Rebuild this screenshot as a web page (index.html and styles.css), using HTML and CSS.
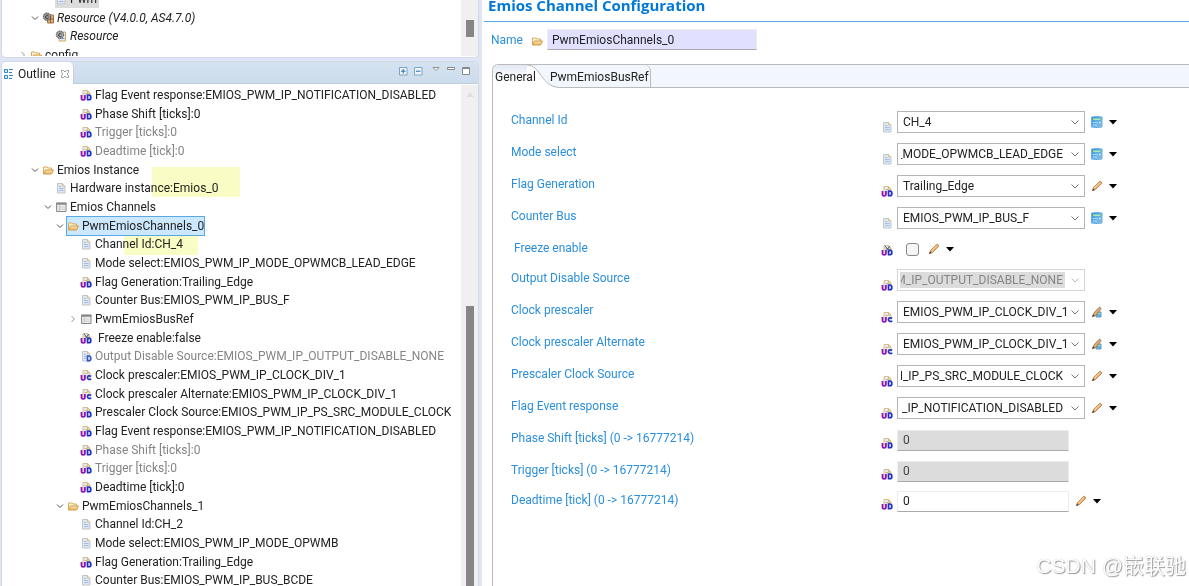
FILE: index.html
```html
<!DOCTYPE html>
<html lang="en">
<head>
<meta charset="utf-8">
<title>Emios Channel Configuration</title>
<link rel="stylesheet" href="styles.css">
</head>
<body>
<svg class="sprite" aria-hidden="true">
  <defs>
    <linearGradient id="fold" x1="0" y1="0" x2="0" y2="1"><stop offset="0" stop-color="#fdebb8"/><stop offset="1" stop-color="#e9b45c"/></linearGradient>
    <linearGradient id="calcfill" x1="0" y1="0" x2="1" y2="1"><stop offset="0" stop-color="#2f8fe0"/><stop offset="1" stop-color="#8fd0f4"/></linearGradient>
  </defs>
  <symbol id="folder" viewBox="0 0 12 12"><path d="M1.500 9.500v-6.500h3.500l1 1h3.500v2" fill="#fdf3d3" stroke="#dba95c"/><path d="M1.500 10l2-4h8l-2 4z" fill="url(#fold)" stroke="#cf9a4b"/></symbol>
  <symbol id="doc" viewBox="0 0 12 12"><path d="M2.500 1.500h5l2.500 2.500v7h-7.500z" fill="#dce8f7" stroke="#c3c6c8"/><path d="M7.500 1.500v2.500h2.500" fill="#f6e3b0" stroke="#d6c08f"/><path d="M4 4.500h2M4 6.500h4.500M4 8.500h4.500" stroke="#a3bcdf"/></symbol>
  <symbol id="page" viewBox="0 0 12 12"><path d="M3 9v-7.500h4.500l2.500 2.500v5" fill="#e3ebf6" stroke="#d3bf8c"/><path d="M7.500 1.500v2.500h2.500M4.500 4.500h3" fill="none" stroke="#d8b56a"/></symbol>
  <symbol id="ud" viewBox="0 0 12 12"><use href="#page"/><path d="M1.500 6v3.200q0 1.600 1.700 1.600t1.700-1.600v-3.200" fill="none" stroke="#9213b5" stroke-width="1.800"/><path d="M7.500 6v4.800h1.200q2.200 0 2.200-2.400t-2.200-2.400z" fill="#d9dcff" stroke="#1f2fc4" stroke-width="1.600"/></symbol>
  <symbol id="xud" viewBox="0 0 12 12"><use href="#ud"/><path d="M4 2l5 6M9 2l-5 6" stroke="#425b8e"/></symbol>
  <symbol id="uc" viewBox="0 0 12 12"><use href="#page"/><path d="M1.500 6v3.200q0 1.600 1.700 1.600t1.700-1.600v-3.200" fill="none" stroke="#9213b5" stroke-width="1.800"/><path d="M11.300 7.300q-3.600-1.400-3.800 1.200t3.800 1.600" fill="none" stroke="#2438b8" stroke-width="1.700"/></symbol>
  <symbol id="dd" viewBox="0 0 12 12"><use href="#doc"/><path d="M7.500 6v4.800h1.200q2.200 0 2.200-2.400t-2.200-2.400z" fill="#d9dcff" stroke="#2f55bb" stroke-width="1.500"/></symbol>
  <symbol id="table" viewBox="0 0 12 12"><path d="M1.500 2h9.500v8.500h-9.500z" fill="#f1f1f1" stroke="#888"/><path d="M1 2.800h10.500" stroke="#888" stroke-width="2"/><path d="M4.500 4v6M1.500 6h9.500M1.500 8.200h9.500" stroke="#bbb" stroke-width=".7"/></symbol>
  <symbol id="gear" viewBox="0 0 12 12"><path d="M6 3h5.500v8h-6z" fill="#e2b47b" stroke="#a5713e"/><path d="M5.500 7h6M8.500 4v7" stroke="#8b5d35"/><circle cx="5" cy="4.700" r="3.700" fill="#999" stroke="#444" stroke-dasharray="1.500 .7"/><path d="M6.500 4a1.600 1.600 0 1 0 0 2" fill="none" stroke="#333"/></symbol>
  <symbol id="geardoc" viewBox="0 0 12 12"><path d="M4 2h6.500v9h-6.500z" fill="#e6eefb" stroke="#d0aa62"/><path d="M5.500 8.500h4" stroke="#6f93c8"/><circle cx="5" cy="4.700" r="3.700" fill="#aaa" stroke="#444" stroke-dasharray="1.500 .7"/><path d="M6.500 4a1.600 1.600 0 1 0 0 2" fill="none" stroke="#333"/></symbol>
  <symbol id="calc" viewBox="0 0 12 12"><path d="M.5 1q5-1 10.500 0v10q-5 1-10.500 0z" fill="url(#calcfill)" stroke="#6aace0"/><path d="M2 2.500h7.500v1.500h-7.500z" fill="#dbf6c5" stroke="#5fc8a0" stroke-width=".6"/><path d="M2 6.500h5M2 9h4" stroke="#c4e6fb" stroke-dasharray="1.500 .6"/><path d="M8 6.500h1.500" stroke="#e9f7ff"/><path d="M8 9h1.500" stroke="#d6735c"/></symbol>
  <symbol id="pencil" viewBox="0 0 12 12"><path d="M1.500 10.500l1-3 6-6q1-.6 1.800.4t0 1.800l-6 6z" fill="#f0ae68" stroke="#a8784c" stroke-width=".8"/><path d="M3.500 8l5-5" stroke="#ffdda7"/><path d="M1 11l1.200-2.400 1.300 1.300z" fill="#393939"/></symbol>
  <symbol id="pencalc" viewBox="0 0 12 12"><path d="M5 6h5v5h-5z" fill="#61afd0" stroke="#6a9fc0"/><path d="M6 7.500h3.500" stroke="#a5e0a8"/><path d="M1.500 10.500l1-3 5.500-6q1-.6 1.600.4t0 1.800l-5.500 6z" fill="#e9aa70" stroke="#85664d" stroke-width=".8"/><path d="M1 11l1.200-2.400 1.300 1.300z" fill="#393939"/></symbol>
  <symbol id="down" viewBox="0 0 12 12"><path d="M3 4.500l3 3 3-3" fill="none" stroke="#555"/></symbol>
  <symbol id="right" viewBox="0 0 12 12"><path d="M4.500 3l3 3-3 3" fill="none" stroke="#999"/></symbol>
  <symbol id="menu" viewBox="0 0 8 12"><path d="M0 4h8l-4 4.500z" fill="#000"/></symbol>
</svg>

<main class="workbench">
  <div class="side">
    <section class="pane explorer" aria-label="Project explorer">
      <ul class="tree">
        <li class="l1"><i class="tw"></i><span class="node grey"><svg><use href="#doc"/></svg>Pwm</span></li>
        <li class="l0"><svg class="tw"><use href="#down"/></svg><span class="node"><svg><use href="#gear"/></svg><em>Resource (V4.0.0, AS4.7.0)</em></span></li>
        <li class="l1"><i class="tw"></i><span class="node"><svg><use href="#geardoc"/></svg><em>Resource</em></span></li>
        <li class="root"><svg class="tw"><use href="#right"/></svg><span class="node"><svg><use href="#folder"/></svg>config</span></li>
      </ul>
      <div class="track"><div class="thumb short"></div></div>
    </section>

    <section class="pane outline" aria-label="Outline">
      <header class="bar">
        <div class="tab">
          <svg viewBox="0 0 10 12"><path d="M.5 1.500h3v3h-3zM.5 7.500h3v3h-3z" fill="#d9ecfa" stroke="#2f87c8"/><path d="M5 1.500h4M5 4.500h3M5 7.500h4M5 10.500h3" stroke="#2f87c8"/></svg>
          <span>Outline</span>
          <svg viewBox="0 0 10 12"><path d="M1.500 2.500h2l1.500 1.500 1.500-1.500h2v2l-1.500 1.500 1.500 1.500v2h-2l-1.500-1.500-1.500 1.500h-2v-2l1.500-1.500-1.500-1.500z" fill="#fff" stroke="#888" stroke-width=".8"/></svg>
        </div>
        <div class="tools">
          <button aria-label="Expand all"><svg viewBox="0 0 10 10"><path d="M1.500 1.500h7.500v7.500h-7.500z" fill="#eef6fc" stroke="#7da6c6"/><path d="M5.200 3v4.500M3 5.200h4.500" stroke="#1d6fae"/></svg></button>
          <button aria-label="Collapse all"><svg viewBox="0 0 10 10"><path d="M1.500 1.500h7.500v7.500h-7.500z" fill="#eef6fc" stroke="#7da6c6"/><path d="M3 5.200h4.500" stroke="#1d6fae"/></svg></button>
          <button class="view" aria-label="View menu"><svg viewBox="0 0 10 10"><path d="M2 1.500h6l-3 3z" fill="#fff" stroke="#777" stroke-width=".8"/></svg></button>
          <button aria-label="Minimize"><svg viewBox="0 0 10 10"><path d="M1.500 1.500h7v2h-7z" fill="#fff" stroke="#888"/></svg></button>
          <button aria-label="Maximize"><svg viewBox="0 0 10 10"><path d="M1.500 1.500h7v7h-7z" fill="#fff" stroke="#888"/><path d="M1 2.500h8" stroke="#888"/></svg></button>
        </div>
      </header>
      <div class="body">
        <ul class="tree">
          <li class="l3"><i class="tw"></i><span class="node"><svg><use href="#ud"/></svg>Flag Event response:EMIOS_PWM_IP_NOTIFICATION_DISABLED</span></li>
          <li class="l3"><i class="tw"></i><span class="node"><svg><use href="#ud"/></svg>Phase Shift [ticks]:0</span></li>
          <li class="l3 off"><i class="tw"></i><span class="node"><svg><use href="#ud"/></svg>Trigger [ticks]:0</span></li>
          <li class="l3 off"><i class="tw"></i><span class="node"><svg><use href="#ud"/></svg>Deadtime [tick]:0</span></li>
          <li class="l0"><svg class="tw"><use href="#down"/></svg><span class="node"><svg><use href="#folder"/></svg>Emios Instance</span></li>
          <li class="l1 mark instance"><i class="tw"></i><span class="node"><svg><use href="#doc"/></svg>Hardware instance:Emios_0</span></li>
          <li class="l1"><svg class="tw"><use href="#down"/></svg><span class="node"><svg><use href="#table"/></svg>Emios Channels</span></li>
          <li class="l2"><svg class="tw"><use href="#down"/></svg><span class="node selected"><svg><use href="#folder"/></svg>PwmEmiosChannels_0</span></li>
          <li class="l3 mark channel"><i class="tw"></i><span class="node"><svg><use href="#doc"/></svg>Channel Id:CH_4</span></li>
          <li class="l3"><i class="tw"></i><span class="node"><svg><use href="#doc"/></svg>Mode select:EMIOS_PWM_IP_MODE_OPWMCB_LEAD_EDGE</span></li>
          <li class="l3"><i class="tw"></i><span class="node"><svg><use href="#ud"/></svg>Flag Generation:Trailing_Edge</span></li>
          <li class="l3"><i class="tw"></i><span class="node"><svg><use href="#doc"/></svg>Counter Bus:EMIOS_PWM_IP_BUS_F</span></li>
          <li class="l3"><svg class="tw"><use href="#right"/></svg><span class="node"><svg><use href="#table"/></svg>PwmEmiosBusRef</span></li>
          <li class="l3"><i class="tw"></i><span class="node"><svg><use href="#xud"/></svg>&nbsp;Freeze enable:false</span></li>
          <li class="l3 off"><i class="tw"></i><span class="node"><svg><use href="#dd"/></svg>Output Disable Source:EMIOS_PWM_IP_OUTPUT_DISABLE_NONE</span></li>
          <li class="l3"><i class="tw"></i><span class="node"><svg><use href="#uc"/></svg>Clock prescaler:EMIOS_PWM_IP_CLOCK_DIV_1</span></li>
          <li class="l3"><i class="tw"></i><span class="node"><svg><use href="#uc"/></svg>Clock prescaler Alternate:EMIOS_PWM_IP_CLOCK_DIV_1</span></li>
          <li class="l3"><i class="tw"></i><span class="node"><svg><use href="#ud"/></svg>Prescaler Clock Source:EMIOS_PWM_IP_PS_SRC_MODULE_CLOCK</span></li>
          <li class="l3"><i class="tw"></i><span class="node"><svg><use href="#ud"/></svg>Flag Event response:EMIOS_PWM_IP_NOTIFICATION_DISABLED</span></li>
          <li class="l3 off"><i class="tw"></i><span class="node"><svg><use href="#ud"/></svg>Phase Shift [ticks]:0</span></li>
          <li class="l3 off"><i class="tw"></i><span class="node"><svg><use href="#ud"/></svg>Trigger [ticks]:0</span></li>
          <li class="l3"><i class="tw"></i><span class="node"><svg><use href="#ud"/></svg>Deadtime [tick]:0</span></li>
          <li class="l2"><svg class="tw"><use href="#down"/></svg><span class="node"><svg><use href="#folder"/></svg>PwmEmiosChannels_1</span></li>
          <li class="l3"><i class="tw"></i><span class="node"><svg><use href="#doc"/></svg>Channel Id:CH_2</span></li>
          <li class="l3"><i class="tw"></i><span class="node"><svg><use href="#doc"/></svg>Mode select:EMIOS_PWM_IP_MODE_OPWMB</span></li>
          <li class="l3"><i class="tw"></i><span class="node"><svg><use href="#ud"/></svg>Flag Generation:Trailing_Edge</span></li>
          <li class="l3"><i class="tw"></i><span class="node"><svg><use href="#doc"/></svg>Counter Bus:EMIOS_PWM_IP_BUS_BCDE</span></li>
        </ul>
        <div class="track"><svg class="up" viewBox="0 0 8 6"><path d="M4 0l4 5h-8z" fill="#e0e0e0"/></svg><div class="thumb long"></div></div>
      </div>
    </section>
  </div>

  <section class="editor">
    <h1>Emios Channel Configuration</h1>
    <div class="name">
      <label for="name">Name</label>
      <svg><use href="#folder"/></svg>
      <input id="name" type="text" value="PwmEmiosChannels_0">
    </div>
    <div class="panel">
      <div class="tabs" role="tablist">
        <button class="general" role="tab" aria-selected="true">General</button>
        <svg class="curve" viewBox="0 0 32 23"><path d="M0 0C14 0 14 22 32 22.500V23H0z" fill="#fff"/><path d="M0 0C14 0 14 22 32 22.500" fill="none" stroke="#b5b9be"/></svg>
        <button class="busref" role="tab">PwmEmiosBusRef</button>
        <div class="rest"></div>
      </div>
      <form class="fields">
        <div class="row"><label for="f1">Channel Id</label><svg class="kind"><use href="#doc"/></svg><select id="f1"><option>CH_4</option></select><button type="button" class="act" aria-label="Edit Channel Id"><svg><use href="#calc"/></svg><svg class="menu"><use href="#menu"/></svg></button></div>
        <div class="row"><label for="f2">Mode select</label><svg class="kind"><use href="#doc"/></svg><select id="f2" class="tail"><option>EMIOS_PWM_IP_MODE_OPWMCB_LEAD_EDGE</option></select><button type="button" class="act" aria-label="Edit Mode select"><svg><use href="#calc"/></svg><svg class="menu"><use href="#menu"/></svg></button></div>
        <div class="row"><label for="f3">Flag Generation</label><svg class="kind"><use href="#ud"/></svg><select id="f3"><option>Trailing_Edge</option></select><button type="button" class="act" aria-label="Edit Flag Generation"><svg><use href="#pencil"/></svg><svg class="menu"><use href="#menu"/></svg></button></div>
        <div class="row"><label for="f4">Counter Bus</label><svg class="kind"><use href="#doc"/></svg><select id="f4"><option>EMIOS_PWM_IP_BUS_F</option></select><button type="button" class="act" aria-label="Edit Counter Bus"><svg><use href="#calc"/></svg><svg class="menu"><use href="#menu"/></svg></button></div>
        <div class="row check"><label for="f5">&nbsp;Freeze enable</label><svg class="kind"><use href="#xud"/></svg><input id="f5" type="checkbox"><button type="button" class="act" aria-label="Edit Freeze enable"><svg><use href="#pencil"/></svg><svg class="menu"><use href="#menu"/></svg></button></div>
        <div class="row"><label for="f6">Output Disable Source</label><svg class="kind"><use href="#ud"/></svg><select id="f6" class="tail" disabled><option>EMIOS_PWM_IP_OUTPUT_DISABLE_NONE</option></select></div>
        <div class="row"><label for="f7">Clock prescaler</label><svg class="kind"><use href="#uc"/></svg><select id="f7"><option>EMIOS_PWM_IP_CLOCK_DIV_1</option></select><button type="button" class="act" aria-label="Edit Clock prescaler"><svg><use href="#pencalc"/></svg><svg class="menu"><use href="#menu"/></svg></button></div>
        <div class="row"><label for="f8">Clock prescaler Alternate</label><svg class="kind"><use href="#uc"/></svg><select id="f8"><option>EMIOS_PWM_IP_CLOCK_DIV_1</option></select><button type="button" class="act" aria-label="Edit Clock prescaler Alternate"><svg><use href="#pencalc"/></svg><svg class="menu"><use href="#menu"/></svg></button></div>
        <div class="row"><label for="f9">Prescaler Clock Source</label><svg class="kind"><use href="#ud"/></svg><select id="f9" class="tail"><option>EMIOS_PWM_IP_PS_SRC_MODULE_CLOCK</option></select><button type="button" class="act" aria-label="Edit Prescaler Clock Source"><svg><use href="#pencil"/></svg><svg class="menu"><use href="#menu"/></svg></button></div>
        <div class="row"><label for="f10">Flag Event response</label><svg class="kind"><use href="#ud"/></svg><select id="f10" class="tail"><option>EMIOS_PWM_IP_NOTIFICATION_DISABLED</option></select><button type="button" class="act" aria-label="Edit Flag Event response"><svg><use href="#pencil"/></svg><svg class="menu"><use href="#menu"/></svg></button></div>
        <div class="row entry"><label for="f11">Phase Shift [ticks] (0 -&gt; 16777214)</label><svg class="kind"><use href="#ud"/></svg><input id="f11" type="text" value="0" disabled></div>
        <div class="row entry tight"><label for="f12">Trigger [ticks] (0 -&gt; 16777214)</label><svg class="kind"><use href="#ud"/></svg><input id="f12" type="text" value="0" disabled></div>
        <div class="row entry tight"><label for="f13">Deadtime [tick] (0 -&gt; 16777214)</label><svg class="kind"><use href="#ud"/></svg><input id="f13" type="text" value="0"><button type="button" class="act" aria-label="Edit Deadtime"><svg><use href="#pencil"/></svg><svg class="menu"><use href="#menu"/></svg></button></div>
      </form>
    </div>
    <div class="watermark">CSDN @嵌联驰</div>
  </section>
</main>
</body>
</html>
```
FILE: styles.css
```css
* { box-sizing: border-box; }
html, body { height: 100%; }
body {
  margin: 0;
  overflow: hidden;
  background: #dfe5f5;
  color: #222;
  font: 12px/16px Roboto, "Noto Sans", "Noto Sans CJK SC", sans-serif;
}
svg { display: block; flex: none; width: 12px; height: 12px; }
button, input, select { font: inherit; color: inherit; margin: 0; }
button { border: 0; padding: 0; background: none; }
.sprite { position: absolute; width: 0; height: 0; }

.workbench { display: grid; grid-template-columns: minmax(0, 479fr) minmax(0, 707fr); column-gap: 3px; height: 100%; }
.side { display: flex; flex-direction: column; gap: 3px; min-height: 0; padding-left: 1px; }
.pane { background: #fff; border: 1px solid #d3d9e4; overflow: hidden; }

/* Project explorer */
.explorer { display: flex; flex: none; height: 58px; border-top: 0; border-radius: 0 0 5px 5px; padding-bottom: 1px; }
.explorer .tree { margin-top: -11px; height: 67px; overflow: hidden; }

.tree { flex: 1; min-width: 0; margin: 0; padding: 0; list-style: none; white-space: nowrap; }
.tree li { position: relative; display: flex; align-items: center; height: 19px; }
.tree li:nth-child(3n) { height: 18px; }
.tree .root { padding-left: 14px; }
.tree .l0 { padding-left: 26px; }
.tree .l1 { padding-left: 39px; }
.tree .l2 { padding-left: 51px; }
.tree .l3 { padding-left: 64px; }
.tw { flex: none; width: 14px; height: 12px; }
.node { display: flex; align-items: center; gap: 3px; height: 18px; }
.off { color: #858585; }
.grey { background: #dcdcdc; padding-right: 2px; }
.selected { background: #cce8ff; outline: 1px solid #5aa9e6; }
.mark::after { content: ""; position: absolute; background: #f9fdc5; mix-blend-mode: multiply; }
.instance::after { left: 150px; top: -12px; width: 88px; height: 30px; }
.channel::after { left: 122px; top: 1px; width: 74px; height: 19px; }

.track { flex: none; width: 17px; background: #f0f0f0; }
.thumb { width: 8px; margin: 0 auto; background: #868686; }
.short { height: 17px; margin-top: 20px; }
.long { height: 300px; margin-top: 208px; }
.up { width: 8px; height: 6px; margin: 7px auto 0; }

/* Outline view */
.outline { display: flex; flex: 1; flex-direction: column; min-height: 0; border-bottom: 0; border-radius: 5px 5px 0 0; }
.bar { display: flex; flex: none; justify-content: space-between; height: 22px; background: linear-gradient(#d5e3f0, #cbdcec); border-bottom: 1px solid #bfccdb; }
.tab { display: flex; align-items: center; gap: 4px; height: 22px; padding: 2px 3px 0 2px; background: #fff; border-right: 1px solid #c5cede; border-radius: 0 5px 0 0; }
.tab svg { width: 10px; }
.tools { display: flex; gap: 5px; padding: 4px 7px 0 0; }
.tools button { width: 10px; height: 10px; }
.tools svg { width: 10px; height: 10px; }
.tools .view { margin-left: 3px; }
.body { display: flex; flex: 1; min-height: 0; padding-top: 1px; }

/* Editor */
.editor { position: relative; display: flex; flex-direction: column; min-width: 0; background: #fff; overflow: hidden; }
h1 { flex: none; height: 22px; margin: 0 0 0 2px; padding-left: 4px; font: bold 15px/10px "Open Sans", "Noto Sans", sans-serif; color: #0078d7; border-bottom: 1px solid #5ba7e6; }
label { color: #2b8fdc; }
.name { display: flex; align-items: center; height: 35px; padding-left: 9px; }
.name label { width: 32px; }
.name svg { margin: 3px 4px 0 8px; }
input[type="text"] { width: 172px; height: 21px; padding: 0 5px; border: 1px solid #ededed; border-bottom-color: #aaa; background: #fff; outline: 0; }
.name input[type="text"] { width: 210px; padding: 0 4px; background: #e1e0ff; }
.panel { flex: 1; min-height: 0; margin: 7px 0 0 10px; border-left: 1px solid #bbb; border-top: 1px solid #bbb; border-radius: 6px 0 0 0; }
.tabs { display: flex; height: 23px; background: #f2f7fd; border-radius: 6px 0 0 0; overflow: hidden; }
.general { position: relative; z-index: 1; flex: none; width: 34px; padding-left: 2px; white-space: nowrap; text-align: left; background: linear-gradient(#e1e8f3, #fff 60%); }
.curve { width: 32px; height: 23px; }
.busref { flex: none; margin-left: -9px; padding-right: 1px; border-right: 1px solid #bbb; border-radius: 0 6px 0 0; background: linear-gradient(#bbb, #bbb) right bottom / calc(100% - 9px) 1px no-repeat; }
.rest { flex: 1; border-bottom: 1px solid #bbb; }

.fields { padding: 18px 0 0 18px; }
.row { display: grid; grid-template-columns: minmax(180px, 366px) 12px auto auto; justify-content: start; align-items: center; column-gap: 4px; height: 32px; }
.row label { align-self: start; padding-top: 6px; }
.kind { margin-top: 9px; }
.entry .kind { margin-top: 6px; }
.check { height: 30px; }
.check .kind { margin-top: 2px; }
.tight { height: 30px; }
select {
  width: 188px; height: 22px; padding: 0 14px 0 5px;
  border: 1px solid #b5b5b5; border-radius: 0; appearance: none; outline: 0;
  background: #fff url("data:image/svg+xml,%3Csvg xmlns='http://www.w3.org/2000/svg' width='8' height='5'%3E%3Cpath d='M.5.5l3.500 3.500 3.500-3.500' fill='none' stroke='%23777'/%3E%3C/svg%3E") no-repeat right 5px center;
}
.tail { direction: rtl; padding: 0 21px 0 3px; }
select:disabled {
  color: #858585; border-color: #d5d5d5; opacity: 1;
  background:
    url("data:image/svg+xml,%3Csvg xmlns='http://www.w3.org/2000/svg' width='8' height='5'%3E%3Cpath d='M.5.5l3.500 3.500 3.500-3.500' fill='none' stroke='%23bbb'/%3E%3C/svg%3E") no-repeat right 5px center,
    linear-gradient(#dcdcdc, #dcdcdc) no-repeat 2px 2px / calc(100% - 21px) calc(100% - 4px),
    #fff;
}
input:disabled { background: #dcdcdc; color: #444; }
.act { display: flex; align-items: center; gap: 6px; margin-left: 2px; }
.act .menu { width: 8px; }
input[type="checkbox"] { appearance: none; width: 13px; height: 13px; margin-left: 9px; border: 1px solid #888; border-radius: 3px; background: #f5f5f5; }
.check .act { margin-left: 5px; }
.watermark { position: absolute; right: 3px; bottom: 6px; font: 21px/28px "Liberation Sans", "Noto Sans CJK SC", sans-serif; color: #fff; text-shadow: 1px 1px 1px #999, 0 0 1px #bbb; }
```
